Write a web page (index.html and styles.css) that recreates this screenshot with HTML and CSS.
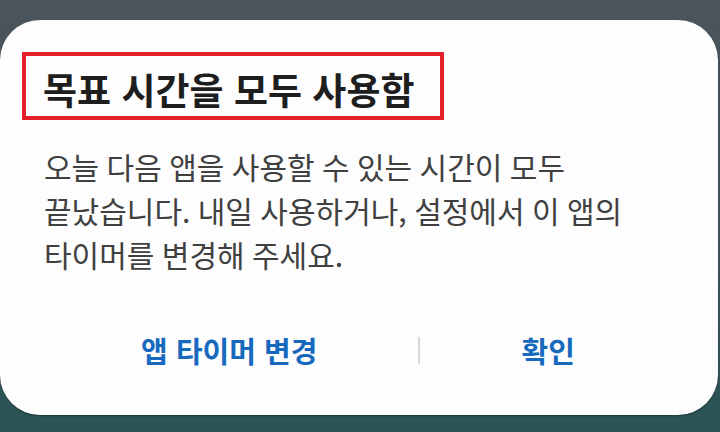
FILE: index.html
```html
<!DOCTYPE html>
<html lang="ko">
<head>
<meta charset="utf-8">
<link rel="stylesheet" href="styles.css">
</head>
<body>
<div class="screen">
  <div class="dialog">
    <div class="title-box">
      <h1 class="title">목표 시간을 모두 사용함</h1>
    </div>
    <p class="message">오늘 다음 앱을 사용할 수 있는 시간이 모두<br>끝났습니다. 내일 사용하거나, 설정에서 이 앱의<br>타이머를 변경해 주세요.</p>
    <div class="actions">
      <button class="action">앱 타이머 변경</button>
      <span class="divider"></span>
      <button class="action">확인</button>
    </div>
  </div>
</div>
</body>
</html>
```

FILE: styles.css
```css
html, body {
  margin: 0;
  padding: 0;
}
body {
  width: 720px;
  height: 432px;
  overflow: hidden;
  font-family: "Noto Sans CJK KR", "Noto Sans", sans-serif;
}
.screen {
  width: 720px;
  height: 432px;
  background: linear-gradient(180deg, #4b545b 0%, #3d5458 60%, #2a5356 100%);
  padding-top: 20px;
  box-sizing: border-box;
}
.dialog {
  width: 718px;
  height: 395px;
  background: #fdfdfd;
  border-radius: 40px;
  box-shadow: 0 1px 2px rgba(0,0,0,0.35);
  display: flex;
  flex-direction: column;
  box-sizing: border-box;
}
.title-box {
  align-self: flex-start;
  margin: 32px 0 0 22px;
  border: 4px solid #e3202a;
  padding: 0 26px 0 17px;
  height: 60px;
  display: flex;
  align-items: center;
}
.title {
  margin: 0;
  font-size: 37px;
  font-weight: 700;
  color: #1e1e1e;
  line-height: 1;
  padding-top: 6px;
}
.message {
  margin: 24px 44px 0 44px;
  font-size: 30px;
  line-height: 44px;
  color: #404040;
  word-spacing: -1px;
  word-break: keep-all;
}
.actions {
  margin-top: auto;
  margin-bottom: 50px;
  padding: 0 42px 0 40px;
  display: flex;
  align-items: center;
  height: 30px;
}
.action {
  flex: 1 1 auto;
  background: none;
  border: 0;
  padding: 0;
  font-family: "Noto Sans CJK KR", "Noto Sans", sans-serif;
  font-size: 29px;
  font-weight: 700;
  color: #1769be;
  line-height: 30px;
}
.divider {
  width: 2px;
  height: 27px;
  background: #d9d9d9;
  flex: none;
}
```
